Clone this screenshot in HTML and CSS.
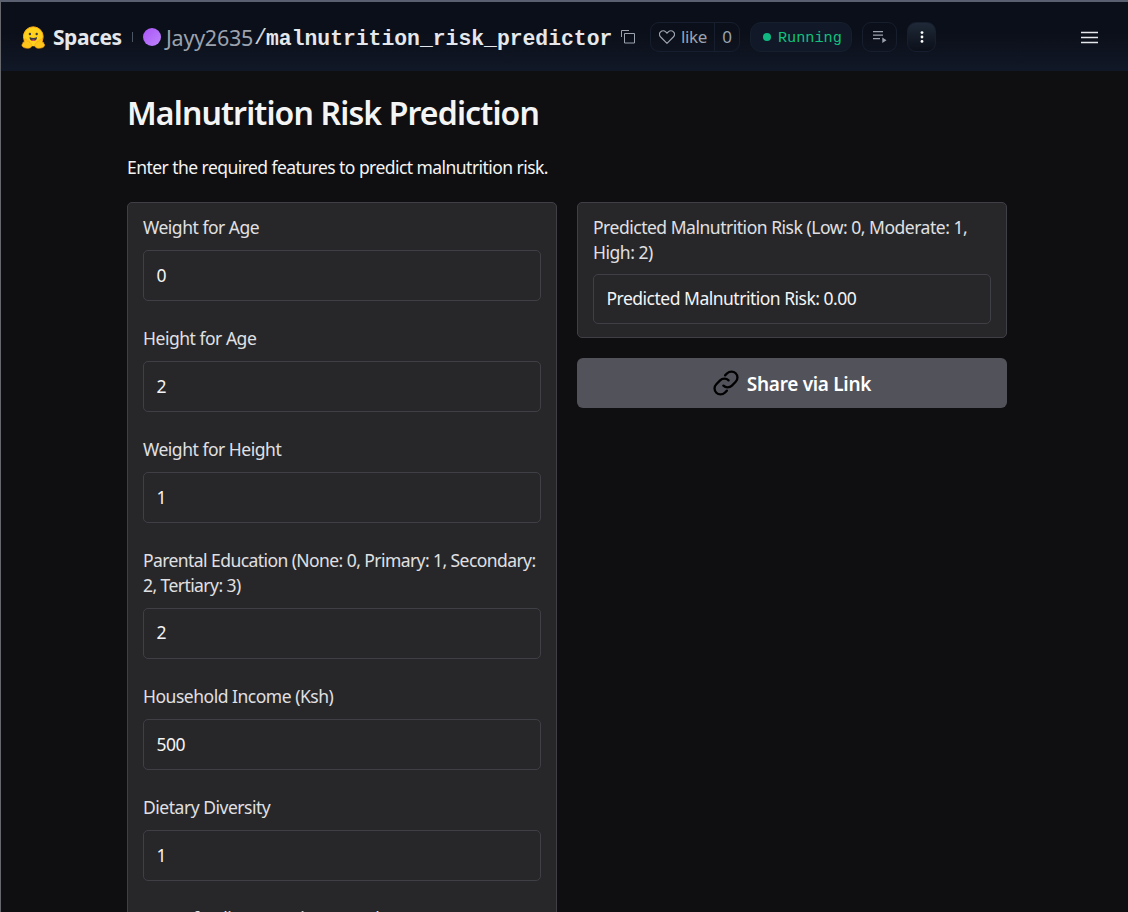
FILE: index.html
```html
<!DOCTYPE html>
<html lang="en">
<head>
<meta charset="utf-8">
<title>Malnutrition Risk Prediction</title>
<link rel="stylesheet" href="styles.css">
</head>
<body>
<div class="window">
  <header class="topbar">
    <svg class="logo" viewBox="0 0 24 24" width="24" height="24">
      <circle cx="12.300" cy="11.500" r="9.800" fill="#ffd21e"/>
      <path d="M3.500 16A9.800 9.800 0 1 1 21.100 16" fill="none" stroke="#ffab12" stroke-width="1"/>
      <circle cx="8.900" cy="9" r="1.200" fill="#3a3b45"/>
      <circle cx="15.700" cy="9" r="1.200" fill="#3a3b45"/>
      <path d="M8.600 12c2.400 1.200 5 1.200 7.400 0 .2 2.500-1.500 4.100-3.700 4.100S8.400 14.500 8.600 12z" fill="#3a3b45"/>
      <path d="M10.200 15.200c1.200-1.100 3-1.100 4.200 0-1.300 1.100-2.900 1.100-4.200 0z" fill="#f0475f"/>
      <path d="M4.300 14c1.100-.6 1.700 1.300 2.100 2.500 1-1.200 2.400-.6 1.900.8 1.700.2 3.400 2.700 2 4.700-1.500 1.900-7 1.600-8.700-.4-1.200-1.400-.7-2.400.2-2.900-.4-1.300.5-1.700 1.400-1.400-.2-1.200.3-3 1.100-3.300z" fill="#ffc51a" stroke="#ffa012" stroke-width=".6"/>
      <path d="M20.300 14c-1.100-.6-1.700 1.300-2.100 2.500-1-1.200-2.400-.6-1.900.8-1.700.2-3.400 2.700-2 4.700 1.500 1.900 7 1.600 8.700-.4 1.200-1.400.7-2.400-.2-2.900.4-1.300-.5-1.700-1.400-1.400.2-1.200-.3-3-1.100-3.300z" fill="#ffc51a" stroke="#ffa012" stroke-width=".6"/>
    </svg>
    <span class="spaces">Spaces</span>
    <span class="divider"></span>
    <span class="avatar"></span>
    <span class="owner">Jayy2635</span>
    <span class="slash">/</span>
    <span class="repo">malnutrition_risk_predictor</span>
    <svg class="copy" viewBox="0 0 14 14" width="14" height="14" fill="none" stroke="#9ca3af"><path d="M.5 7V.5H8M3.500 3.500h10v9.500h-10z"/></svg>
    <span class="like">
      <span class="like-main">
        <svg viewBox="0 0 16 14" width="16" height="14" fill="none" stroke="#9ca3af" stroke-width="1.200"><path d="M8 13.300 1.700 7C.2 5.400.2 3.200 1.600 1.800 3 .4 5.300.4 6.700 1.800L8 3.100l1.300-1.300c1.400-1.400 3.700-1.400 5.100 0 1.400 1.400 1.400 3.600-.1 5.200z"/></svg>
        <span class="like-text">like</span>
      </span>
      <span class="like-count">0</span>
    </span>
    <span class="status"><span class="dot"></span><span class="status-text">Running</span></span>
    <span class="icon-btn logs">
      <svg viewBox="0 0 14 12" width="14" height="12" fill="#9ca3af"><path d="M0 0h10v1.300H0zM0 3.500h10v1.300H0zM0 7h7v1.300H0zM9.300 6.500 13.500 9.200 9.300 12z"/></svg>
    </span>
    <span class="icon-btn more">
      <svg viewBox="0 0 4 12" width="4" height="12" fill="#fff"><circle cx="2" cy="1.600" r="1.400"/><circle cx="2" cy="6" r="1.400"/><circle cx="2" cy="10.400" r="1.400"/></svg>
    </span>
    <svg class="burger" viewBox="0 0 17 13" width="17" height="13" stroke="#e5e7eb" stroke-width="1.700"><path d="M0 1.500h17M0 6.500h17M0 11.500h17"/></svg>
  </header>
  <main class="page">
    <h1 class="title"><span class="title-text">Malnutrition Risk Prediction</span></h1>
    <p class="intro"><span class="intro-text">Enter the required features to predict malnutrition risk.</span></p>
    <div class="columns">
      <section class="card form">
        <div class="field"><div class="label">Weight for Age</div><div class="input">0</div></div>
        <div class="field"><div class="label">Height for Age</div><div class="input">2</div></div>
        <div class="field"><div class="label">Weight for Height</div><div class="input">1</div></div>
        <div class="field"><div class="label education">Parental Education (None: 0, Primary: 1, Secondary:<br>2, Tertiary: 3)</div><div class="input">2</div></div>
        <div class="field"><div class="label">Household Income (Ksh)</div><div class="input">500</div></div>
        <div class="field"><div class="label">Dietary Diversity</div><div class="input">1</div></div>
        <div class="field"><div class="label">Breastfeeding Duration (Months)</div><div class="input">6</div></div>
      </section>
      <div class="side">
        <section class="card result">
          <div class="label">Predicted Malnutrition Risk (Low: 0, Moderate: 1,<br>High: 2)</div>
          <div class="output">Predicted Malnutrition Risk: 0.00</div>
        </section>
        <div class="share">
          <svg viewBox="0 0 26 26" width="26" height="26" fill="none" stroke="#000" stroke-width="2.300" stroke-linecap="round"><path d="M12.100 5.400l2.100-2.100a6 6 0 0 1 8.500 8.500l-3.800 3.800a6 6 0 0 1-8.500 0"/><path d="M13.900 20.600l-2.100 2.100a6 6 0 0 1-8.500-8.500l3.800-3.800a6 6 0 0 1 8.500 0"/></svg>
          <span class="share-text">Share via Link</span>
        </div>
      </div>
    </div>
  </main>
</div>
</body>
</html>
```
FILE: styles.css
```css
* { box-sizing: border-box; }
body { margin: 0; background: #0f0f11; font-family: "Noto Sans", "Open Sans", sans-serif; }
svg { display: block; flex: none; }
.window { height: 912px; overflow: hidden; border-top: 2px solid #5b6070; border-left: 1px solid #65676c; }
.topbar { height: 69px; display: flex; align-items: center; padding: 1px 30px 0 20px; white-space: nowrap;
  background: linear-gradient(#0b0f19 0%, #0b0f19 45%, #111827 100%); }
.logo { margin-right: 8px; }
.spaces { width: 69px; font-size: 21px; font-weight: 700; letter-spacing: -0.450px; color: #e5e7eb; }
.divider { width: 1px; height: 10px; background: #4b5563; margin: 0 10px; }
.avatar { width: 18px; height: 18px; border-radius: 50%; background: linear-gradient(135deg, #a855f7, #c084fc); margin-right: 5px; }
.owner { width: 88px; font-size: 21.500px; letter-spacing: -0.250px; color: #9ca3af; }
.slash { width: 12px; padding-top: 3px; font: 22px "Liberation Mono", monospace; color: #d1d5db; }
.repo { width: 347px; padding-top: 3px; font: 700 21.390px "Liberation Mono", monospace; color: #e5e7eb; }
.copy { margin: 0 15px 0 8px; }
.like { height: 30px; width: 90px; display: flex; border: 1px solid #171e2e; border-radius: 9px; font-size: 17px; color: #9ca3af; }
.like-main { width: 64px; display: flex; align-items: center; gap: 6px; padding-left: 8px; border-right: 1px solid #171e2e; }
.like-text { letter-spacing: -0.400px; padding-bottom: 2px; }
.like-count { flex: 1; display: flex; align-items: center; justify-content: center; padding-bottom: 2px; }
.status { width: 102px; height: 30px; margin-left: 10px; display: flex; align-items: center; padding-left: 12px; gap: 7px;
  border: 1px solid #151f2e; border-radius: 11px; background: #111827; }
.dot { width: 8px; height: 8px; border-radius: 50%; background: #10b981; }
.status-text { padding-top: 2px; font: 15.200px "Liberation Mono", monospace; color: #10c27e; }
.icon-btn { height: 30px; display: flex; align-items: center; justify-content: center; border: 1px solid #171e2e; border-radius: 9px; }
.logs { width: 35px; margin-left: 10px; }
.more { width: 29px; margin-left: 10px; background: linear-gradient(#1f2937, #0b0f19); }
.burger { margin-left: auto; }

.page { padding: 0 120px 0 126px; }
.title { margin: 0; padding-top: 18px; height: 78px; font-size: 32px; line-height: 48px; font-weight: 600; color: #f4f4f5; }
.title-text { letter-spacing: -0.870px; }
.intro { margin: 0; height: 53px; line-height: 36px; font-size: 17.500px; color: #f4f4f5; white-space: nowrap; }
.intro-text { letter-spacing: -0.550px; }
.columns { display: grid; grid-template-columns: 430px 430px; column-gap: 20px; align-items: start; }
.card { background: #27272a; border: 1px solid #3f3f46; border-radius: 5px; padding: 12px 15px; }
.form { height: 760px; display: flex; flex-direction: column; gap: 24.900px; }
.label { font-size: 17.500px; line-height: 24.400px; letter-spacing: -0.480px; color: #e0e0e3; white-space: nowrap; margin-bottom: 10.600px; }
.education { letter-spacing: -0.570px; }
.input, .output { height: 51.200px; display: flex; align-items: center; padding: 0 0 1.500px 12.500px; border: 1px solid #3f3f46; border-radius: 5px;
  font-size: 17.500px; letter-spacing: -0.500px; color: #f4f4f5; white-space: nowrap; }
.side { display: flex; flex-direction: column; gap: 20px; }
.result { height: 136px; }
.result .label { line-height: 24.800px; margin-bottom: 9.600px; }
.output { height: 50px; padding-bottom: 2px; }
.share { height: 50px; display: flex; align-items: center; justify-content: center; gap: 8px; border-radius: 6px; background: #52525b;
  color: #fff; font-size: 19px; font-weight: 600; }
.share-text { letter-spacing: -0.300px; padding-top: 2px; }
```
